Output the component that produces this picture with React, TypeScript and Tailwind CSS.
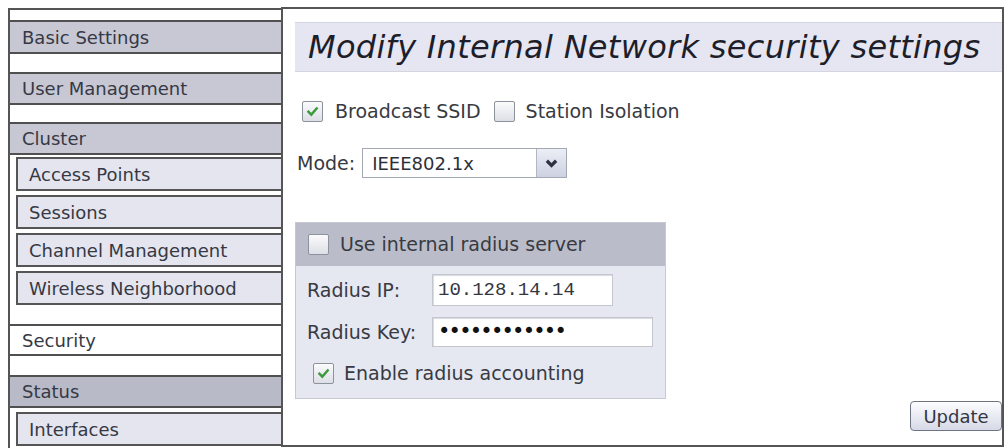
import React from "react";

function Check({ checked = false }: { checked?: boolean }) {
  return (
    <span className="w-[21px] h-[21px] shrink-0 border border-[#8d929c] rounded-[2px] bg-linear-to-b from-[#fbfbfc] to-[#dcdfe6] flex items-center justify-center">
      {checked && (
        <svg viewBox="0 0 12 12" className="w-[13px] h-[13px]">
          <path d="M2.2 6.2 L4.9 8.9 L9.9 3.2" stroke="#3c9a3c" strokeWidth="2.2" fill="none" strokeLinecap="square" />
        </svg>
      )}
    </span>
  );
}

function NavHead({ label, tone = "gray", h }: { label: string; tone?: "gray" | "dark" | "white"; h: string }) {
  const bg = tone === "white" ? "bg-white" : tone === "dark" ? "bg-[#b9bac7]" : "bg-[#c7c8d4]";
  return (
    <div className={`${h} ${bg} border-y-2 border-[#505050] flex items-center pl-[12px] text-[18px] text-[#363944]`}>
      {label}
    </div>
  );
}

function NavSub({ label }: { label: string }) {
  return (
    <div className="ml-[6px] h-[34px] bg-[#e4e5ef] border-2 border-r-0 border-[#555] flex items-center pl-[11px] text-[18px] text-[#363944]">
      {label}
    </div>
  );
}

export default function App() {
  return (
    <div className="w-[1007px] h-[448px] bg-white flex pl-[8px] pt-[7px] overflow-hidden font-['DejaVu_Sans',Verdana,sans-serif]">
      {/* left nav */}
      <div className="w-[273px] h-[441px] mt-[1px] border-l-2 border-t-2 border-[#555] flex flex-col">
        <div className="h-[10px]" />
        <NavHead label="Basic Settings" h="h-[34px]" />
        <div className="h-[18px]" />
        <NavHead label="User Management" h="h-[33px]" />
        <div className="h-[17px]" />
        <NavHead label="Cluster" h="h-[33px]" />
        <div className="flex flex-col gap-[4px] mt-[2px]">
          <NavSub label="Access Points" />
          <NavSub label="Sessions" />
          <NavSub label="Channel Management" />
          <NavSub label="Wireless Neighborhood" />
        </div>
        <div className="h-[19px]" />
        <NavHead label="Security" tone="white" h="h-[32px]" />
        <div className="h-[19px]" />
        <NavHead label="Status" tone="dark" h="h-[33px]" />
        <div className="mt-[4px]">
          <NavSub label="Interfaces" />
        </div>
      </div>

      {/* main panel */}
      <div className="w-[723px] h-[440px] border-2 border-[#555] flex flex-col text-[19px] text-[#383a42]">
        <div className="ml-[12px] mt-[13px] h-[50px] bg-[#e5e6f2] border-y border-[#d3d5e0] flex items-center pl-[13px]">
          <span className="italic text-[32px] tracking-[0.3px] text-[#1d1e2a]">Modify Internal Network security settings</span>
        </div>

        <div className="ml-[19px] mt-[28px] flex items-center h-[22px]">
          <Check checked />
          <span className="ml-[12px]">Broadcast SSID</span>
          <span className="ml-[13px]"><Check /></span>
          <span className="ml-[11px]">Station Isolation</span>
        </div>

        <div className="ml-[14px] mt-[26px] flex items-center">
          <span>Mode:</span>
          <div className="ml-[7px] w-[205px] h-[30px] border border-[#a3a8b2] bg-white flex">
            <span className="flex-1 flex items-center pl-[9px] text-[18px] text-[#2e3038]">IEEE802.1x</span>
            <span className="w-[30px] border-l border-[#b3b7c3] bg-linear-to-b from-[#eceef6] to-[#cdd1e1] flex items-center justify-center">
              <svg viewBox="0 0 12 12" className="w-[15px] h-[15px]">
                <path d="M2.3 3.8 L6 7.6 L9.7 3.8" stroke="#2d3140" strokeWidth="2.6" fill="none" />
              </svg>
            </span>
          </div>
        </div>

        <div className="ml-[12px] mt-[44px] w-[371px] border border-[#c6c9d4] bg-[#e5e7f1] flex flex-col pb-[14px]">
          <div className="h-[43px] bg-[#babdc9] flex items-center pl-[12px]">
            <Check />
            <span className="ml-[11px]">Use internal radius server</span>
          </div>
          <div className="mt-[8px] flex items-center pl-[11px]">
            <span className="w-[125px]">Radius IP:</span>
            <div className="w-[181px] h-[32px] bg-white border border-[#c3c6cf] shadow-[inset_1px_1px_1px_#d8dae0] flex items-center pl-[5px] font-['Liberation_Mono',monospace] text-[19px] text-[#34363d]">
              10.128.14.14
            </div>
          </div>
          <div className="mt-[11px] flex items-center pl-[11px]">
            <span className="w-[125px]">Radius Key:</span>
            <div className="w-[221px] h-[30px] bg-white border border-[#c3c6cf] shadow-[inset_1px_1px_1px_#d8dae0] flex items-center pl-[5px] text-[21px] tracking-[-1.8px] text-[#111]">
              ••••••••••••
            </div>
          </div>
          <div className="mt-[16px] flex items-center pl-[17px] h-[21px]">
            <Check checked />
            <span className="ml-[10px]">Enable radius accounting</span>
          </div>
        </div>

        <div className="self-end mt-[2px] w-[92px] h-[30px] rounded-[4px] border border-[#6f7483] bg-linear-to-b from-[#fdfdff] to-[#d6d9e7] flex items-center justify-center text-[18px] text-[#333642]">
          Update
        </div>
      </div>
    </div>
  );
}
